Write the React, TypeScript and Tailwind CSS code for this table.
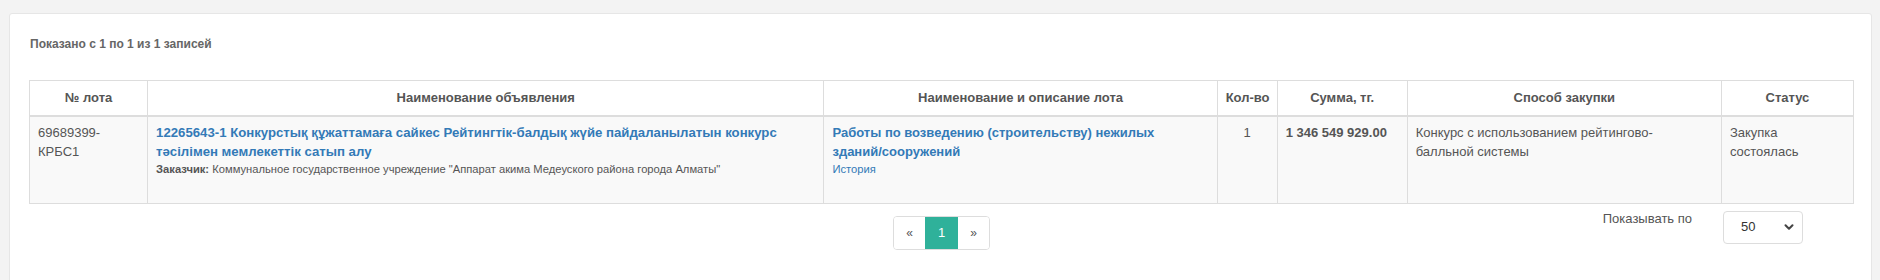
import { ChevronDown } from 'lucide-react';

const font = { fontFamily: '"Liberation Sans", Arial, sans-serif' };

const headers = [
  { label: '№ лота', w: 'w-[118px]' },
  { label: 'Наименование объявления', w: 'w-[676px]' },
  { label: 'Наименование и описание лота', w: 'w-[393px]' },
  { label: 'Кол-во', w: 'w-[60px]' },
  { label: 'Сумма, тг.', w: 'w-[130px]' },
  { label: 'Способ закупки', w: 'w-[314px]' },
  { label: 'Статус', w: 'w-[132px]' },
];

const cell = 'border border-[#ddd] px-[8px] pt-[7px] leading-[18.5px]';

export default function App() {
  return (
    <div className="min-h-[280px] bg-[#f3f3f3] pt-[13px] pl-[9px] pr-[8px] text-[13px] text-[#555]" style={font}>
      <div className="min-h-[280px] rounded-[3px] border border-[#e6e6e6] bg-white px-[19px] pt-[21px]">
        {/* info line */}
        <div className="pl-[1px] text-[12px] font-bold leading-[18px] text-[#666]">
          Показано с 1 по 1 из 1 записей
        </div>

        {/* table */}
        <table className="mt-[27px] w-[1825px] table-fixed border-collapse">
          <colgroup>
            {headers.map((h) => (
              <col key={h.label} className={h.w} />
            ))}
          </colgroup>
          <thead>
            <tr>
              {headers.map((h) => (
                <th
                  key={h.label}
                  className="whitespace-nowrap border border-b-2 border-[#ddd] px-[8px] py-[8px] text-center text-[13px] font-bold leading-[18px] text-[#555]"
                >
                  {h.label}
                </th>
              ))}
            </tr>
          </thead>
          <tbody>
            <tr className="bg-[#f9f9f9] align-top">
              <td className={`${cell} h-[87px] text-[#555]`}>
                69689399-
                <br />
                КРБС1
              </td>
              <td className={cell}>
                <a href="#" className="font-bold text-[13.2px] text-[#337ab7]">
                  12265643-1 Конкурстық құжаттамаға сайкес Рейтингтік-балдық жүйе пайдаланылатын конкурс
                  <br />
                  тәсілімен мемлекеттік сатып алу
                </a>
                <div className="text-[11.2px] leading-[16px] text-[#555]">
                  <span className="font-bold">Заказчик:</span> Коммунальное государственное учреждение "Аппарат акима Медеуского района города Алматы"
                </div>
              </td>
              <td className={cell}>
                <a href="#" className="block font-bold text-[#337ab7]">
                  Работы по возведению (строительству) нежилых
                  <br />
                  зданий/сооружений
                </a>
                <a href="#" className="block text-[11.2px] leading-[16px] text-[#337ab7]">
                  История
                </a>
              </td>
              <td className={`${cell} text-center text-[#555]`}>1</td>
              <td className={`${cell} font-bold text-[#555]`}>1 346 549 929.00</td>
              <td className={`${cell} text-[#555]`}>
                Конкурс с использованием рейтингово-
                <br />
                балльной системы
              </td>
              <td className={`${cell} text-[#555]`}>
                Закупка
                <br />
                состоялась
              </td>
            </tr>
          </tbody>
        </table>

        {/* footer: pagination + page size */}
        <div className="grid w-[1825px] grid-cols-[1fr_auto_1fr] pt-[11px]">
          <div />
          <div className="mt-[1px] flex h-[34px] self-start overflow-hidden rounded-[4px] border border-[#ddd] text-[12px]">
            <button className="flex w-[31px] items-center justify-center bg-white text-[#555]">«</button>
            <button className="flex w-[33px] items-center justify-center bg-[#2fb19a] text-[13px] text-white">1</button>
            <button className="flex w-[31px] items-center justify-center bg-white text-[#555]">»</button>
          </div>
          <div className="-mt-[5px] flex items-start justify-end pr-[51px]">
            <span className="leading-[18px] text-[#555]">Показывать по</span>
            <div className="ml-[31px] mt-[1px] flex h-[33px] w-[80px] items-center justify-between rounded-[4px] border border-[#ddd] bg-white pl-[17px] pr-[6px] text-[13px] text-[#333]">
              <span>50</span>
              <ChevronDown size={14} strokeWidth={3.5} className="text-[#444]" />
            </div>
          </div>
        </div>
      </div>
    </div>
  );
}
